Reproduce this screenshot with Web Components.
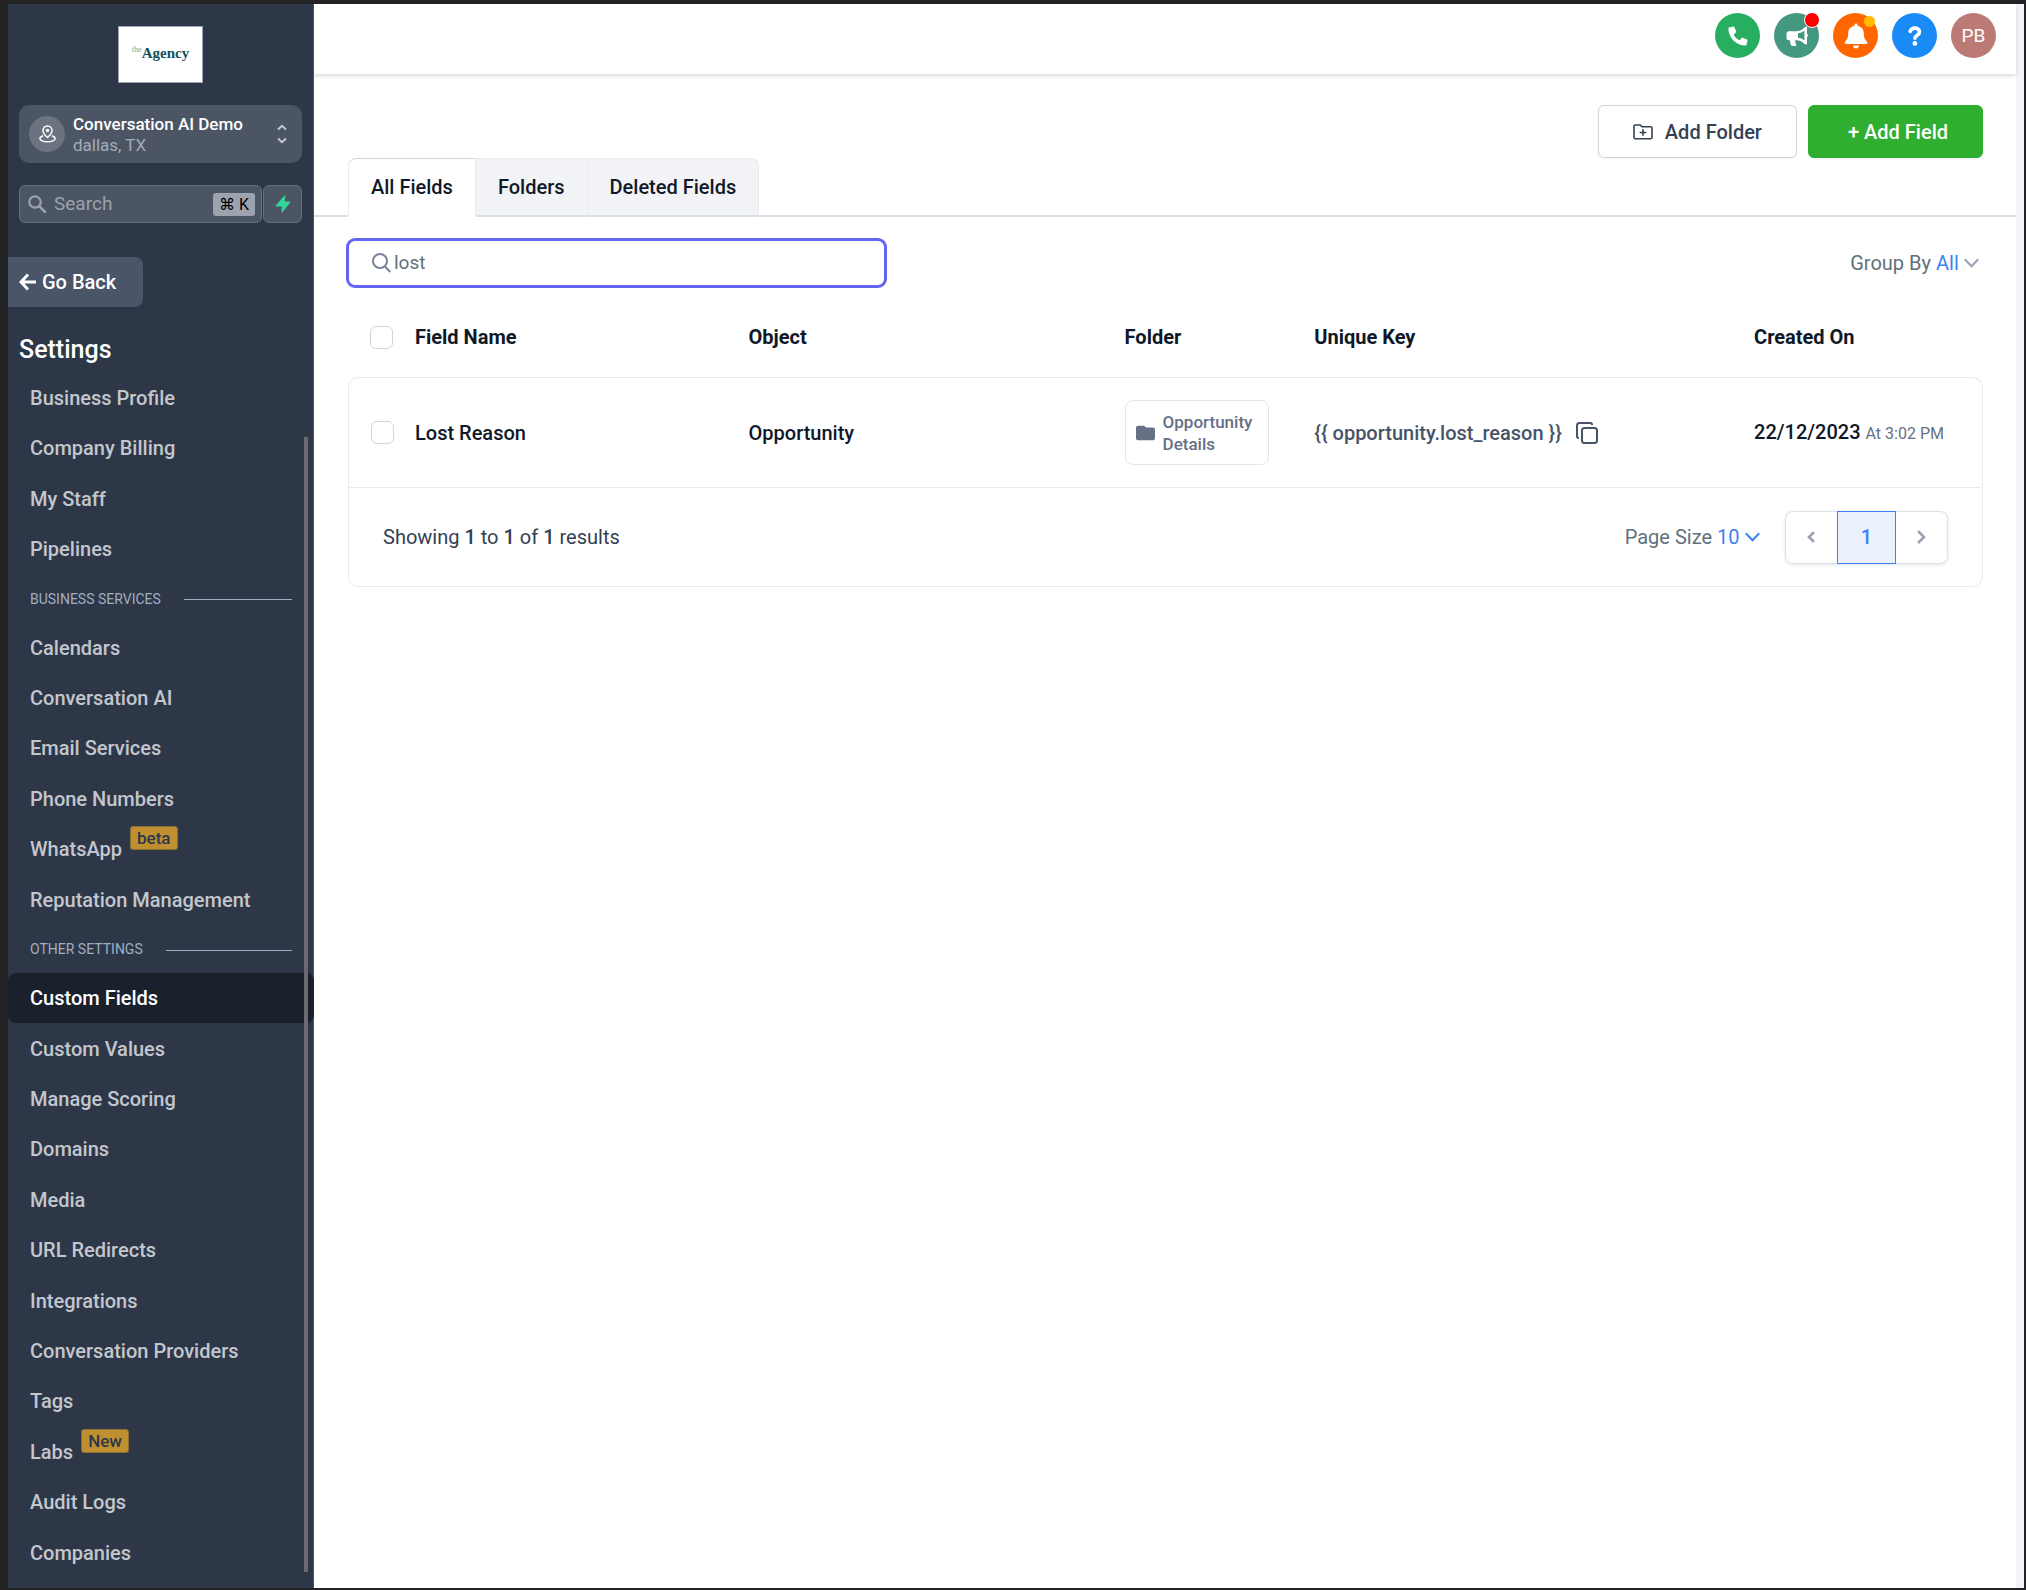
<!DOCTYPE html>
<html lang="en">
<head>
<meta charset="utf-8">
<meta name="viewport" content="width=device-width, initial-scale=1">
<title>Custom Fields</title>
<style>
  body { margin: 0; font-family: Roboto, "Liberation Sans", sans-serif; font-size: 20px; color: #101828; background: #232325; }
</style>
</head>
<body>
<app-shell>
  <side-bar slot="side">
    <location-switch slot="top" place="dallas, TX">Conversation AI Demo</location-switch>
    <quick-search slot="top"></quick-search>
    <nav-group>
      <nav-item>Business Profile</nav-item>
      <nav-item>Company Billing</nav-item>
      <nav-item>My Staff</nav-item>
      <nav-item>Pipelines</nav-item>
    </nav-group>
    <nav-group heading="Business Services">
      <nav-item>Calendars</nav-item>
      <nav-item>Conversation AI</nav-item>
      <nav-item>Email Services</nav-item>
      <nav-item>Phone Numbers</nav-item>
      <nav-item badge="beta">WhatsApp</nav-item>
      <nav-item>Reputation Management</nav-item>
    </nav-group>
    <nav-group heading="Other Settings">
      <nav-item active>Custom Fields</nav-item>
      <nav-item>Custom Values</nav-item>
      <nav-item>Manage Scoring</nav-item>
      <nav-item>Domains</nav-item>
      <nav-item>Media</nav-item>
      <nav-item>URL Redirects</nav-item>
      <nav-item>Integrations</nav-item>
      <nav-item>Conversation Providers</nav-item>
      <nav-item>Tags</nav-item>
      <nav-item badge="New">Labs</nav-item>
      <nav-item>Audit Logs</nav-item>
      <nav-item>Companies</nav-item>
    </nav-group>
  </side-bar>

  <top-bar>
    <round-button label="Phone" style="--bg: #27ae60">
      <svg width="20" height="20" viewBox="0 0 20 20" fill="#fff"><path d="M1.2 1.6 5.2.6c.5-.1 1 .1 1.200.6l1.800 4.200c.2.4.1.9-.3 1.200L5.700 8.400c1.300 2.700 3.300 4.700 5.900 5.900l1.900-2.200c.3-.4.800-.5 1.200-.3l4.200 1.800c.5.2.700.700.6 1.200l-1 4c-.1.500-.5.800-1 .8C8.100 19.600.4 11.900.4 2.600c0-.5.3-.9.8-1z"/></svg>
    </round-button>
    <round-button label="Announcements" dot="red" style="--bg: #459880">
      <svg width="22" height="20" viewBox="0 0 22 20"><path d="M20 .4c.6 0 1 .4 1 1v6.300a2 2 0 0 1 0 3.400v6.500c0 .9-1 1.300-1.700.800l-2.400-1.900a10 10 0 0 0-6.300-2.200H9.300c-.5 1.800.1 3 .900 4.200.4.700 0 1.500-.8 1.500H6.200c-.5 0-.9-.3-1.100-.700-.8-1.700-1.200-3.300-1-5H3a2.500 2.500 0 0 1-2.500-2.500V7.700A2.500 2.500 0 0 1 3 5.200h7.600c2.300 0 4.500-.8 6.300-2.200L19.300.8c.2-.3.400-.4.700-.4z" fill="#fff"/><path d="M18.400 4.700v9.600a13 13 0 0 0-6.400-2.600V7.300a13 13 0 0 0 6.400-2.600z" fill="#459880"/></svg>
    </round-button>
    <round-button label="Notifications" dot="amber" style="--bg: #ff6600">
      <svg width="24" height="26" viewBox="0 0 24 26" fill="#fff"><path d="M12 .5c-.9 0-1.500.6-1.500 1.500v.8C6.700 3.500 4.200 6.400 4.200 10.200c0 4.600-1.400 6.700-3.200 8.600-.8.900-.2 2.200 1 2.200h20c1.200 0 1.800-1.300 1-2.200-1.800-1.900-3.200-4-3.200-8.600 0-3.800-2.500-6.700-6.300-7.400V2c0-.9-.6-1.500-1.500-1.500zM9 22.600h6c0 1.600-1.300 2.900-3 2.900s-3-1.300-3-2.900z"/></svg>
    </round-button>
    <round-button label="Help" style="--bg: #188bf6">
      <svg width="14" height="20" viewBox="0 0 14 20"><path d="M2.200 5.400C2.900 3.200 4.600 2.100 6.800 2.100c2.700 0 4.700 1.500 4.700 3.800 0 3.300-4.600 3.200-4.600 6.300" fill="none" stroke="#fff" stroke-width="3.600" stroke-linecap="round"/><circle cx="6.900" cy="17.400" r="2.400" fill="#fff"/></svg>
    </round-button>
    <round-button label="Account" style="--bg: #bb7a74">PB</round-button>
  </top-bar>

  <page-actions></page-actions>
  <tab-strip>
    <tab-item active>All Fields</tab-item>
    <tab-item>Folders</tab-item>
    <tab-item>Deleted Fields</tab-item>
  </tab-strip>
  <filter-bar></filter-bar>
  <fields-table></fields-table>
</app-shell>

<script>
/** Small base: puts the markup returned by render() into an open shadow root. */
class UiElement extends HTMLElement {
  connectedCallback() {
    if (this.shadowRoot) return;
    this.attachShadow({ mode: 'open' });
    this.shadowRoot.innerHTML = this.render();
  }
}

/* Page frame: sidebar on the left, content on the right */
class AppShell extends UiElement {
  render() {
    return `
      <style>
        :host { display: grid; grid-template-columns: 306px minmax(0, 1fr); min-height: 100vh; box-sizing: border-box; padding: 4px 2px 2px 8px; background: #232325; }
        main { background: #fff; border-right: 8px solid #f1f5f9; }
      </style>
      <slot name="side"></slot>
      <main><slot></slot></main>
    `;
  }
}
customElements.define('app-shell', AppShell);

class SideBar extends UiElement {
  render() {
    return `
      <style>
        :host { display: flex; flex-direction: column; position: relative; box-sizing: border-box; padding: 22px 0 10px; background: #2d3748; border-right: 1px solid #4a5568; color: #fff; }
        .top { display: flex; flex-direction: column; gap: 22px; padding: 0 11px; }
        .logo { align-self: center; display: flex; align-items: center; justify-content: center; box-sizing: border-box; width: 85px; height: 57px; padding-bottom: 4px; background: #fff; border: 1px solid #9aa5b1; font: bold 15px/18px "Liberation Serif", serif; color: #12505c; text-decoration: none; }
        .logo small { align-self: center; padding-bottom: 6px; font-weight: normal; font-size: 8px; color: #4fb3ac; }
        .back { align-self: flex-start; display: flex; align-items: center; gap: 6px; height: 50px; margin-top: 34px; padding: 0 27px 0 11px; border: 0; border-radius: 0 8px 8px 0; background: #4a5568; color: #fff; font: 500 20px/24px Roboto, sans-serif; }
        h2 { margin: 28px 0 8px 11px; font-size: 25px; line-height: 30px; font-weight: 500; }
        nav { flex: 1; display: flex; flex-direction: column; }
        .thumb { position: absolute; right: 5px; top: 433px; bottom: 16px; width: 4px; background: #6b6b6f; }
      </style>
      <div class="top">
        <a class="logo" href="#"><small>the</small>Agency</a>
        <slot name="top"></slot>
      </div>
      <button class="back" type="button">
        <svg width="17" height="18" viewBox="0 0 17 18" fill="none" stroke="#fff" stroke-width="3"><path d="M9 1.500 2 9l7 7.500M2.500 9H17"/></svg>Go Back
      </button>
      <h2>Settings</h2>
      <nav aria-label="Settings"><slot></slot></nav>
      <div class="thumb"></div>
    `;
  }
}
customElements.define('side-bar', SideBar);

class LocationSwitch extends UiElement {
  render() {
    return `
      <style>
        :host { display: block; }
        button { display: flex; align-items: center; gap: 8px; width: 100%; height: 58px; padding: 0 14px 0 10px; border: 0; border-radius: 10px; background: #4b5563; color: #fff; font: 500 17px/21px Roboto, sans-serif; text-align: left; }
        .pin { flex: none; display: flex; align-items: center; justify-content: center; width: 36px; height: 36px; border-radius: 50%; background: #6b7280; }
        .name { flex: 1; padding-top: 2px; white-space: nowrap; }
        small { display: block; font-size: 17px; font-weight: 400; color: #a3abb7; }
      </style>
      <button type="button">
        <span class="pin"><svg width="17" height="18" viewBox="0 0 17 18" fill="none" stroke="#fff" stroke-width="1.500" stroke-linejoin="round"><path d="M8.500 12.500C6 10.300 4 8.200 4 5.500a4.500 4.500 0 0 1 9 0c0 2.700-2 4.800-4.500 7z"/><circle cx="8.500" cy="5.600" r="1"/><path d="M4.200 10.700C2.200 11.300.9 12.300.9 13.400c0 1.900 3.400 3.400 7.600 3.400s7.600-1.500 7.600-3.400c0-1.100-1.300-2.100-3.300-2.700"/></svg></span>
        <span class="name"><slot></slot><small>${this.getAttribute('place')}</small></span>
        <svg width="12" height="20" viewBox="0 0 12 20" fill="none" stroke="#c4c8cf" stroke-width="2"><path d="m2 5.500 4-3.700 4 3.700M2 14.500l4 3.700 4-3.700"/></svg>
      </button>
    `;
  }
}
customElements.define('location-switch', LocationSwitch);

class QuickSearch extends UiElement {
  render() {
    return `
      <style>
        :host { display: flex; gap: 1px; }
        .box, button { box-sizing: border-box; height: 38px; border: 1px solid #667080; border-radius: 6px; background: #4b5563; }
        .box { flex: 1; min-width: 0; display: flex; align-items: center; gap: 7px; padding: 0 6px 0 8px; }
        .box svg { flex: none; }
        input { flex: 1; min-width: 0; padding: 0; border: 0; outline: 0; background: none; color: #fff; font: 400 19px/24px Roboto, sans-serif; }
        input::placeholder { color: #9ca3af; opacity: 1; }
        kbd { padding: 0 6px; border-radius: 3px; background: #9ca3af; color: #000; font: 400 16px/23px Roboto, "DejaVu Sans", sans-serif; }
        button { width: 39px; padding: 0; display: flex; align-items: center; justify-content: center; }
      </style>
      <div class="box">
        <svg width="19" height="19" viewBox="0 0 19 19" fill="none" stroke="#9ca3af" stroke-width="2.200"><circle cx="7" cy="7" r="5.700"/><path d="m11.200 11.200 6.500 6.500" stroke-width="2.600"/></svg>
        <input type="text" placeholder="Search" aria-label="Search">
        <kbd>⌘ K</kbd>
      </div>
      <button type="button" aria-label="Quick actions">
        <svg width="16" height="18" viewBox="0 0 16 18" fill="#34d399"><path d="M9.300.8c.5-.6 1.200-.3 1.100.500L9.700 6.500h4.800c.8 0 1.100.700.6 1.300l-7.700 9.400c-.5.600-1.200.3-1.100-.5L7 11.500H1.500c-.8 0-1.100-.700-.6-1.300z"/></svg>
      </button>
    `;
  }
}
customElements.define('quick-search', QuickSearch);

/* Grows with the number of items it holds, so rows share the free height evenly */
class NavGroup extends UiElement {
  render() {
    const heading = this.getAttribute('heading');
    this.style.flexGrow = this.children.length;
    return `
      <style>
        :host { display: flex; flex-direction: column; }
        h3 { display: flex; align-items: center; gap: 23px; margin: 0; height: 48px; padding: 0 21px 0 22px; font-size: 14px; font-weight: 400; line-height: 18px; text-transform: uppercase; white-space: nowrap; color: #a0aec0; }
        h3::after { content: ""; flex: 1; height: 1px; margin-top: 2px; background: #a0aec0; }
      </style>
      ${heading ? `<h3>${heading}</h3>` : ''}
      <slot></slot>
    `;
  }
}
customElements.define('nav-group', NavGroup);

/** Attributes: active, badge */
class NavItem extends UiElement {
  render() {
    const badge = this.getAttribute('badge');
    return `
      <style>
        :host { flex: 1 0 50px; display: block; }
        a { display: flex; align-items: center; gap: 8px; height: 50px; padding-left: 22px; border-radius: 8px; color: #c3c7cd; font-size: 20px; font-weight: 500; line-height: 24px; text-decoration: none; }
        :host([active]) { margin-right: -1px; }
        :host([active]) a { background: #1a202c; color: #fff; }
        .badge { box-sizing: border-box; height: 24px; margin-bottom: 22px; padding: 0 6px; border: 1px solid #8a7034; border-radius: 3px; background: #bf9030; color: #2d3748; font-size: 17px; line-height: 22px; }
      </style>
      <a href="#"${this.hasAttribute('active') ? ' aria-current="page"' : ''}><slot></slot>${badge ? `<span class="badge">${badge}</span>` : ''}</a>
    `;
  }
}
customElements.define('nav-item', NavItem);

class TopBar extends UiElement {
  render() {
    return `
      <style>
        :host { display: flex; justify-content: flex-end; gap: 14px; box-sizing: border-box; height: 70px; padding: 9px 20px 0 0; background: #fff; box-shadow: 0 2px 4px rgba(0, 0, 0, 0.14); }
      </style>
      <slot></slot>
    `;
  }
}
customElements.define('top-bar', TopBar);

/** Attributes: label, dot ('red' | 'amber'). Colour comes from --bg. */
class RoundButton extends UiElement {
  render() {
    const dot = this.getAttribute('dot');
    return `
      <style>
        :host { display: block; position: relative; }
        button { display: flex; align-items: center; justify-content: center; width: 45px; height: 45px; padding: 0; border: 0; border-radius: 50%; background: var(--bg); color: #fff; font: 400 19px/24px Roboto, sans-serif; }
        .dot { position: absolute; border-radius: 50%; }
        .red { right: -1px; top: -1px; width: 14px; height: 14px; border: 1px solid #fff; background: #f00; }
        .amber { right: 3px; top: 3px; width: 11px; height: 11px; background: #ffbc00; }
      </style>
      <button type="button" aria-label="${this.getAttribute('label')}"><slot></slot></button>
      ${dot ? `<span class="dot ${dot}"></span>` : ''}
    `;
  }
}
customElements.define('round-button', RoundButton);

class PageActions extends UiElement {
  render() {
    return `
      <style>
        :host { display: flex; justify-content: flex-end; gap: 11px; padding: 31px 33px 0; }
        button { display: flex; align-items: center; gap: 12px; height: 53px; padding: 0 34px; border: 1px solid #d0d5dd; border-radius: 6px; background: #fff; color: #344054; font: 500 20px/24px Roboto, sans-serif; box-shadow: 0 1px 2px rgba(16, 24, 40, 0.05); }
        .primary { padding: 0 34px 0 39px; border-color: #30ae30; background: #30ae30; color: #fff; }
      </style>
      <button type="button"><svg width="20" height="16" viewBox="0 0 20 16" fill="none" stroke="#344054" stroke-width="1.600" stroke-linecap="round" stroke-linejoin="round"><path d="M1 13V2.500C1 1.600 1.600 1 2.500 1h4.700l2 1.800h8.300c.9 0 1.500.6 1.500 1.500V13c0 .9-.6 1.800-1.500 1.800h-15C1.600 14.800 1 13.900 1 13zM10 5.800v5.400M7.300 8.500h5.400"/></svg>Add Folder</button>
      <button type="button" class="primary">+ Add Field</button>
    `;
  }
}
customElements.define('page-actions', PageActions);

class TabStrip extends UiElement {
  render() {
    return `
      <style>
        :host { display: flex; padding-left: 34px; border-bottom: 2px solid #dbe0e6; }
      </style>
      <slot></slot>
    `;
  }
  connectedCallback() {
    super.connectedCallback();
    this.setAttribute('role', 'tablist');
  }
}
customElements.define('tab-strip', TabStrip);

class TabItem extends UiElement {
  render() {
    const active = this.hasAttribute('active');
    return `
      <style>
        :host { display: block; margin-bottom: -2px; }
        button { display: block; box-sizing: border-box; height: 59px; padding: 0 22px; border: 1px solid #e8eaee; border-left-width: 0; border-bottom: 2px solid #dbe0e6; background: #f2f3f7; color: #101828; font: 500 20px/24px Roboto, sans-serif; }
        :host(:first-child) button { border-left-width: 1px; border-top-left-radius: 8px; }
        :host(:last-child) button { border-top-right-radius: 8px; }
        :host([active]) button { border-top-color: #d0d5dd; border-bottom-color: #fff; background: #fff; }
      </style>
      <button type="button" role="tab" aria-selected="${active}"><slot></slot></button>
    `;
  }
}
customElements.define('tab-item', TabItem);

/** Inline drop-down. Attributes: label, value, tone (chevron colour) */
class PickList extends UiElement {
  render() {
    return `
      <style>
        :host { display: inline-flex; align-items: center; gap: 5px; font-size: 20px; line-height: 24px; color: #607179; }
        select { appearance: none; padding: 0; border: 0; background: none; color: #3b82f6; font: 400 20px/24px Roboto, sans-serif; }
        svg { flex: none; }
      </style>
      <label for="pick">${this.getAttribute('label')}</label>
      <select id="pick"><option>${this.getAttribute('value')}</option></select>
      <svg width="15" height="10" viewBox="0 0 15 10" fill="none" stroke="${this.getAttribute('tone')}" stroke-width="2"><path d="m.8 1.200 6.700 7 6.700-7"/></svg>
    `;
  }
}
customElements.define('pick-list', PickList);

class FilterBar extends UiElement {
  render() {
    return `
      <style>
        :host { display: flex; align-items: center; justify-content: space-between; padding: 21px 37px 0 32px; }
        .search { display: flex; align-items: center; gap: 3px; box-sizing: border-box; flex: 0 1 541px; height: 50px; padding: 0 23px; border: 3px solid #6366f1; border-radius: 9px; }
        svg { flex: none; }
        input { flex: 1; min-width: 0; padding: 0; border: 0; outline: 0; background: none; color: #607179; font: 400 19px/24px Roboto, sans-serif; }
      </style>
      <div class="search">
        <svg width="19" height="20" viewBox="0 0 19 20" fill="none" stroke="#7a8499" stroke-width="2"><circle cx="8" cy="8" r="7"/><path d="m12.800 13.200 5.400 5.800"/></svg>
        <input type="text" value="lost" aria-label="Search fields">
      </div>
      <pick-list label="Group By" value="All" tone="#98a2b3"></pick-list>
    `;
  }
}
customElements.define('filter-bar', FilterBar);

/* Table plus its footer; row cells and footer carry the card's border together */
class FieldsTable extends UiElement {
  render() {
    return `
      <style>
        :host { display: block; margin: 0 33px 0 34px; --line: 1px solid #e8eaee; }
        table { width: 100%; table-layout: fixed; border-collapse: separate; border-spacing: 0; }
        th, td { box-sizing: border-box; padding: 0; text-align: left; white-space: nowrap; font-size: 20px; line-height: 24px; }
        th { height: 89px; padding-top: 9px; font-weight: 700; }
        td { height: 110px; border-top: var(--line); font-weight: 500; }
        td:first-child { border-left: var(--line); border-top-left-radius: 10px; }
        td:last-child { border-right: var(--line); border-top-right-radius: 10px; }
        .check { width: 67px; }
        input { appearance: none; display: block; box-sizing: border-box; width: 23px; height: 23px; margin: 0 0 0 22px; border: 1px solid #d0d5dd; border-radius: 6px; background: #fff; }
        .name { width: 20.4%; }
        .object { width: 23%; }
        .folder { width: 11.6%; }
        .key { width: 26.9%; }
        .chip { display: flex; align-items: center; gap: 8px; box-sizing: border-box; width: 144px; height: 65px; padding: 0 10px; border: 1px solid #e4e7ec; border-radius: 8px; color: #667085; font-size: 17px; line-height: 22px; white-space: normal; }
        svg { flex: none; }
        .code { display: flex; align-items: center; gap: 14px; color: #475467; }
        .code button { display: flex; padding: 0; border: 0; background: none; }
        small { font-size: 16px; font-weight: 400; color: #667085; }
        footer { display: flex; align-items: center; gap: 25px; box-sizing: border-box; height: 100px; padding: 0 34px; border: var(--line); border-radius: 0 0 10px 10px; color: #344054; }
        p { flex: 1; margin: 0; line-height: 24px; }
        b { font-weight: 500; }
        .pager { display: flex; border-radius: 8px; box-shadow: 0 1px 3px rgba(16, 24, 40, 0.12); }
        .pager button { display: flex; align-items: center; justify-content: center; box-sizing: border-box; width: 52px; height: 53px; padding: 0; border: 1px solid #dfe2e8; background: #fff; color: #3b82f6; font: 500 20px/24px Roboto, sans-serif; }
        .pager :first-child { border-right: 0; border-radius: 8px 0 0 8px; }
        .pager :last-child { border-left: 0; border-radius: 0 8px 8px 0; }
        .pager .on { width: 59px; border: 1px solid #3b82f6; background: #ecf1fe; }
      </style>
      <table>
        <thead>
          <tr>
            <th class="check"><input type="checkbox" aria-label="Select all"></th>
            <th class="name">Field Name</th>
            <th class="object">Object</th>
            <th class="folder">Folder</th>
            <th class="key">Unique Key</th>
            <th>Created On</th>
          </tr>
        </thead>
        <tbody>
          <tr>
            <td><input type="checkbox" aria-label="Select Lost Reason"></td>
            <td>Lost Reason</td>
            <td>Opportunity</td>
            <td><div class="chip">
              <svg width="19" height="16" viewBox="0 0 19 16" fill="#667085"><path d="M2 .8h5.500c.6 0 1 .2 1.400.6l1.200 1.200H17c1.100 0 2 .8 2 1.900v8.700c0 1.100-.9 2-2 2H2c-1.100 0-2-.9-2-2V2.700C0 1.600.9.800 2 .8z"/></svg>
              <span>Opportunity Details</span>
            </div></td>
            <td><div class="code">{{ opportunity.lost_reason }}
              <button type="button" aria-label="Copy key"><svg width="22" height="22" viewBox="0 0 22 22" fill="none" stroke="#475467" stroke-width="2" stroke-linejoin="round"><rect x="6" y="6" width="15" height="15" rx="2.500"/><path d="M3 16h-.5C1.600 16 1 15.400 1 14.500v-11C1 2 2 1 3.500 1h11c.9 0 1.500.6 1.500 1.500V3"/></svg></button>
            </div></td>
            <td>22/12/2023 <small>At 3:02 PM</small></td>
          </tr>
        </tbody>
      </table>
      <footer>
        <p>Showing <b>1</b> to <b>1</b> of <b>1</b> results</p>
        <pick-list label="Page Size" value="10" tone="#3b82f6"></pick-list>
        <div class="pager">
          <button type="button" aria-label="Previous page"><svg width="9" height="14" viewBox="0 0 9 14" fill="none" stroke="#98a2b3" stroke-width="2.600"><path d="M8 1 2 7l6 6"/></svg></button>
          <button type="button" class="on" aria-current="page">1</button>
          <button type="button" aria-label="Next page"><svg width="9" height="14" viewBox="0 0 9 14" fill="none" stroke="#98a2b3" stroke-width="2.600"><path d="m1 1 6 6-6 6"/></svg></button>
        </div>
      </footer>
    `;
  }
}
customElements.define('fields-table', FieldsTable);
</script>
</body>
</html>
